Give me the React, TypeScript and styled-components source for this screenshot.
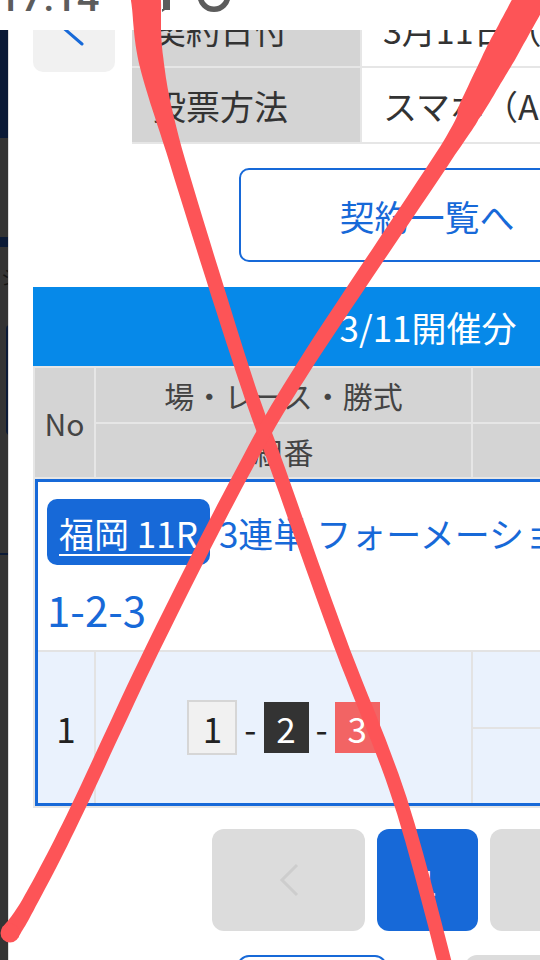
import React from "react";
import styled, { createGlobalStyle } from "styled-components";

const BLUE = "#1769d8";

const Global = createGlobalStyle`
  html, body { margin: 0; padding: 0; background: #fff; }
  body { font-family: "Noto Sans CJK JP", "Noto Sans", sans-serif; }
  * { box-sizing: border-box; }
`;

type Pt = [number, number, number];

function spline(pts: Pt[], steps = 14): Pt[] {
  const out: Pt[] = [];
  const n = pts.length;
  for (let i = 0; i < n - 1; i++) {
    const p0 = pts[Math.max(i - 1, 0)];
    const p1 = pts[i];
    const p2 = pts[i + 1];
    const p3 = pts[Math.min(i + 2, n - 1)];
    for (let s = 0; s < steps; s++) {
      const t = s / steps;
      const cr = (a: number, b: number, c: number, d: number) =>
        0.5 * (2 * b + (-a + c) * t + (2 * a - 5 * b + 4 * c - d) * t * t + (-a + 3 * b - 3 * c + d) * t * t * t);
      out.push([cr(p0[0], p1[0], p2[0], p3[0]), cr(p0[1], p1[1], p2[1], p3[1]), p1[2] + (p2[2] - p1[2]) * t]);
    }
  }
  out.push(pts[n - 1]);
  return out;
}

function ribbon(pts: Pt[]): string {
  const s = spline(pts);
  const L: string[] = [];
  const R: string[] = [];
  s.forEach((p, i) => {
    const a = s[Math.max(i - 1, 0)];
    const b = s[Math.min(i + 1, s.length - 1)];
    const dx = b[0] - a[0];
    const dy = b[1] - a[1];
    const len = Math.hypot(dx, dy) || 1;
    const nx = -dy / len;
    const ny = dx / len;
    const h = p[2] / 2;
    L.push(`${(p[0] + nx * h).toFixed(1)} ${(p[1] + ny * h).toFixed(1)}`);
    R.push(`${(p[0] - nx * h).toFixed(1)} ${(p[1] - ny * h).toFixed(1)}`);
  });
  return `M${L.join(" L")} L${R.reverse().join(" L")} Z`;
}

const strokeA = ribbon([
  [143, -14, 30],
  [146, 0, 30],
  [151, 60, 25],
  [174, 150, 16],
  [242, 368, 14],
  [279, 472, 14],
  [339, 640, 14],
  [400, 800, 14],
  [448, 975, 14],
]);

const strokeB = ribbon([
  [538, -14, 32],
  [530, 0, 32],
  [501, 53, 31],
  [472, 107, 25],
  [448, 150, 17],
  [305, 365, 15],
  [241, 475, 14],
  [152, 650, 14],
  [73, 818, 14],
  [29, 903, 15],
  [10, 933, 19],
]);

const Screen = styled.div`
  position: relative;
  width: 540px;
  height: 960px;
  overflow: hidden;
  display: flex;
  flex-direction: column;
  background: #fff;
`;

const StatusBar = styled.div`
  height: 30px;
  flex: none;
  display: flex;
  align-items: flex-end;
  padding: 0 0 12px 0;
  overflow: hidden;
  background: #fff;
`;

const Clock = styled.span`
  font-family: Roboto, sans-serif;
  font-size: 40px;
  line-height: 1;
  font-weight: 500;
  color: #5c5c5c;
  margin-left: -2px;
  white-space: nowrap;
`;

const StatusIcons = styled.svg`
  align-self: flex-start;
  margin-left: 54px;
  flex: none;
`;

const Body = styled.div`
  flex: 1;
  display: flex;
  min-height: 0;
`;

const SideStrip = styled.div`
  width: 8px;
  flex: none;
  display: flex;
  flex-direction: column;
  background: #343434;
  overflow: hidden;
`;

const StripBlock = styled.div<{ $h: number; $navy?: boolean }>`
  height: ${(p) => p.$h}px;
  flex: none;
  background: ${(p) => (p.$navy ? "#0b1a36" : "#343434")};
`;

const StripGlyph = styled.span`
  font-size: 20px;
  line-height: 20px;
  color: #141414;
  margin: 20px 0 0 1px;
  white-space: nowrap;
`;

const StripTab = styled.div`
  margin: 38px 0 0 6px;
  width: 4px;
  height: 110px;
  flex: none;
  background: #0b1a36;
  border-radius: 6px 0 0 6px;
`;

const StripLine = styled.div`
  margin-top: 118px;
  height: 2px;
  flex: none;
  background: #0b1a36;
`;

const StripEdge = styled.div`
  width: 1px;
  flex: none;
  background: #dedede;
`;

const Viewport = styled.div`
  flex: 1;
  min-width: 0;
  overflow: hidden;
  background: #fff;
`;

const Page = styled.div`
  margin-top: -58px;
  padding-left: 24px;
  width: 900px;
  display: flex;
  flex-direction: column;
`;

const TopRow = styled.div`
  display: flex;
  align-items: flex-start;
  gap: 17px;
`;

const BackButton = styled.div`
  width: 82px;
  height: 100px;
  flex: none;
  border-radius: 10px;
  background: #f1f1f1;
  display: flex;
`;

const InfoTable = styled.div`
  margin-top: 20px;
  display: grid;
  grid-template-columns: 228px 420px;
  grid-auto-rows: 74px;
  gap: 2px;
  padding-bottom: 2px;
  background: #e6e6e6;
`;

const InfoLabel = styled.div`
  background: #d4d4d4;
  display: flex;
  align-items: center;
  padding-left: 20px;
  font-size: 34px;
  color: #333;
  white-space: nowrap;
  overflow: hidden;
`;

const InfoValue = styled(InfoLabel)`
  background: #fff;
  padding-left: 21px;
`;

const ButtonRow = styled.div`
  display: flex;
  padding-left: 206px;
  margin-top: 24px;
`;

const LinkButton = styled.div`
  width: 376px;
  height: 94px;
  border: 2px solid ${BLUE};
  border-radius: 10px;
  background: #fff;
  color: ${BLUE};
  font-size: 35px;
  display: flex;
  align-items: center;
  justify-content: center;
`;

const Section = styled.div`
  margin-top: 25px;
  width: 790px;
  display: flex;
  flex-direction: column;
`;

const EventBar = styled.div`
  height: 79px;
  background: #0689e9;
  color: #fff;
  font-size: 35px;
  display: flex;
  align-items: center;
  justify-content: center;
`;

const TableFrame = styled.div`
  border: 2px solid #e6e6e6;
  background: #e6e6e6;
  display: flex;
  flex-direction: column;
  gap: 2px;
`;

const HeaderGrid = styled.div`
  display: grid;
  grid-template-columns: 59px 375px 1fr;
  grid-template-rows: 54px 53px;
  gap: 2px;
`;

const HeadCell = styled.div<{ $tall?: boolean }>`
  background: #d4d4d4;
  display: flex;
  align-items: center;
  justify-content: center;
  font-size: 30px;
  color: #444;
  white-space: nowrap;
  ${(p) => (p.$tall ? "grid-row: 1 / span 2;" : "")}
`;

const Card = styled.div`
  border: 3px solid ${BLUE};
  background: #fff;
`;

const TitleArea = styled.div`
  padding: 17px 9px 13px;
`;

const TitleLine = styled.div`
  display: flex;
  align-items: center;
  white-space: nowrap;
`;

const Badge = styled.span`
  height: 66px;
  flex: none;
  padding: 0 12px;
  border-radius: 10px;
  background: ${BLUE};
  color: #fff;
  font-size: 35px;
  display: flex;
  align-items: center;
  text-decoration: underline;
  text-decoration-thickness: 2px;
  text-underline-offset: 6px;
`;

const BetType = styled.span`
  margin-left: 9px;
  color: ${BLUE};
  font-size: 35px;
`;

const ComboText = styled.div`
  margin-top: 16px;
  font-size: 42px;
  line-height: 56px;
  color: ${BLUE};
`;

const DataRow = styled.div`
  display: grid;
  grid-template-columns: 56px 375px 1fr;
  height: 153px;
  border-top: 2px solid #e3e3e3;
  gap: 2px;
  background: #e3e3e3;
`;

const DataCell = styled.div`
  background: #eaf2fd;
  display: flex;
  align-items: center;
  justify-content: center;
  font-size: 35px;
  color: #222;
`;

const SubGrid = styled.div`
  display: grid;
  grid-template-rows: 1fr 1fr;
  gap: 2px;
`;

const SubCell = styled.div`
  background: #eaf2fd;
`;

const Boat = styled.span<{ $n: 1 | 2 | 3 }>`
  display: flex;
  align-items: center;
  justify-content: center;
  width: ${(p) => (p.$n === 1 ? 50 : 45)}px;
  height: ${(p) => (p.$n === 1 ? 55 : 51)}px;
  font-size: 35px;
  background: ${(p) => (p.$n === 1 ? "#f1f1f1" : p.$n === 2 ? "#333" : "#f26464")};
  color: ${(p) => (p.$n === 1 ? "#222" : "#fff")};
  border: ${(p) => (p.$n === 1 ? "2px solid #d6d6d6" : "none")};
`;

const Dash = styled.span`
  margin: 0 7px;
  font-size: 35px;
  color: #222;
`;

const Pagination = styled.div`
  margin-top: 21px;
  display: flex;
  gap: 12px;
  padding-left: 179px;
`;

const PageBtn = styled.div<{ $w: number; $active?: boolean }>`
  width: ${(p) => p.$w}px;
  height: 102px;
  flex: none;
  border-radius: 12px;
  background: ${(p) => (p.$active ? BLUE : "#dcdcdc")};
  color: #fff;
  font-size: 35px;
  display: flex;
  align-items: center;
  justify-content: center;
`;

const BottomRow = styled.div`
  margin-top: 24px;
  display: flex;
  gap: 78px;
  padding-left: 204px;
`;

const SmallOutline = styled.div`
  width: 150px;
  height: 100px;
  border: 2px solid ${BLUE};
  border-radius: 12px;
  background: #fff;
`;

const SmallGray = styled.div`
  width: 150px;
  height: 100px;
  border-radius: 12px;
  background: #dcdcdc;
`;

const Scribble = styled.svg`
  position: absolute;
  left: 0;
  top: 0;
  pointer-events: none;
  z-index: 5;
`;

export default function App() {
  return (
    <>
      <Global />
      <Screen>
        <StatusBar>
          <Clock>17:14</Clock>
          <StatusIcons width="90" height="30" viewBox="0 0 90 30">
            <path d="M10 0 H17 V10 H12 L9 12 V9 H10 Z" fill="#5c5c5c" />
            <circle cx="61" cy="-4.5" r="13.8" fill="none" stroke="#5c5c5c" strokeWidth="5.5" />
          </StatusIcons>
        </StatusBar>
        <Body>
          <SideStrip>
            <StripBlock $h={108} $navy />
            <StripBlock $h={99} />
            <StripBlock $h={10} $navy />
            <StripGlyph>ジ</StripGlyph>
            <StripTab />
            <StripLine />
          </SideStrip>
          <StripEdge />
          <Viewport>
            <Page>
              <TopRow>
                <BackButton>
                  <svg width="82" height="100" viewBox="0 0 82 100">
                    <polyline points="49,34 27,53 49,72" fill="none" stroke={BLUE} strokeWidth="3" strokeLinecap="round" strokeLinejoin="round" />
                  </svg>
                </BackButton>
                <InfoTable>
                  <InfoLabel>契約日付</InfoLabel>
                  <InfoValue>3月11日（土）</InfoValue>
                  <InfoLabel>投票方法</InfoLabel>
                  <InfoValue>スマホ（Android）</InfoValue>
                </InfoTable>
              </TopRow>
              <ButtonRow>
                <LinkButton>契約一覧へ</LinkButton>
              </ButtonRow>
              <Section>
                <EventBar>3/11開催分</EventBar>
                <TableFrame>
                  <HeaderGrid>
                    <HeadCell $tall>No</HeadCell>
                    <HeadCell>場・レース・勝式</HeadCell>
                    <HeadCell>金額</HeadCell>
                    <HeadCell>組番</HeadCell>
                    <HeadCell>払戻</HeadCell>
                  </HeaderGrid>
                  <Card>
                    <TitleArea>
                      <TitleLine>
                        <Badge>福岡 11R</Badge>
                        <BetType>3連単 フォーメーション</BetType>
                      </TitleLine>
                      <ComboText>1-2-3</ComboText>
                    </TitleArea>
                    <DataRow>
                      <DataCell>1</DataCell>
                      <DataCell>
                        <Boat $n={1}>1</Boat>
                        <Dash>-</Dash>
                        <Boat $n={2}>2</Boat>
                        <Dash>-</Dash>
                        <Boat $n={3}>3</Boat>
                      </DataCell>
                      <SubGrid>
                        <SubCell />
                        <SubCell />
                      </SubGrid>
                    </DataRow>
                  </Card>
                </TableFrame>
              </Section>
              <Pagination>
                <PageBtn $w={153}>
                  <svg width="24" height="36" viewBox="0 0 24 36">
                    <polyline points="20,3 5,18 20,33" fill="none" stroke="#cdcdcd" strokeWidth="3" />
                  </svg>
                </PageBtn>
                <PageBtn $w={101} $active>1</PageBtn>
                <PageBtn $w={153} />
              </Pagination>
              <BottomRow>
                <SmallOutline />
                <SmallGray />
              </BottomRow>
            </Page>
          </Viewport>
        </Body>
        <Scribble width="540" height="960" viewBox="0 0 540 960">
          <path d={strokeA} fill="#fd5457" />
          <path d={strokeB} fill="#fd5457" />
          <circle cx="10" cy="933" r="9.5" fill="#fd5457" />
        </Scribble>
      </Screen>
    </>
  );
}
